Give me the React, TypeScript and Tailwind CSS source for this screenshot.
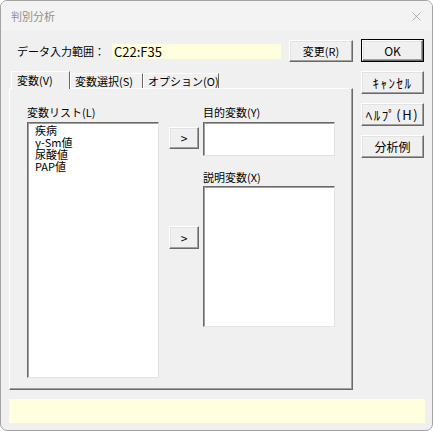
import { X } from 'lucide-react'

const font = { fontFamily: '"Noto Sans CJK JP", "Noto Sans", sans-serif' }

const raised =
  'border border-t-white border-l-white border-r-[#696969] border-b-[#696969] shadow-[inset_-1px_-1px_0_#a0a0a0,inset_1px_1px_0_#e3e3e3] bg-[#f0f0f0]'

const sunken =
  'border border-t-[#696969] border-l-[#696969] border-r-[#e3e3e3] border-b-[#e3e3e3] shadow-[inset_1px_1px_0_#a0a0a0] bg-white'

function Btn({ label, className = '' }: { label: string; className?: string }) {
  return (
    <button
      type="button"
      className={`${raised} flex items-center justify-center whitespace-nowrap leading-none text-black ${className}`}
    >
      {label}
    </button>
  )
}

function SideButton({ label, isDefault, narrow }: { label: string; isDefault?: boolean; narrow?: boolean }) {
  const text = narrow ? 'text-[13px] tracking-[1.5px]' : 'text-[12px]'
  if (isDefault) {
    return (
      <div className="h-[23px] w-[63px] border border-black">
        <Btn label={label} className={`h-full w-full ${text}`} />
      </div>
    )
  }
  return <Btn label={label} className={`h-[23px] w-[63px] ${text}`} />
}

export default function App() {
  return (
    <div
      className="flex h-[431px] w-[433px] flex-col overflow-hidden rounded-[7px] border border-[#a3a3a3] bg-[#f0f0f0] text-black"
      style={font}
    >
      {/* title bar */}
      <div className="flex h-[30px] items-center justify-between bg-[#f3f3f3] pl-[10px] pr-[8px]">
        <span className="text-[11px] text-[#8f8f8f]">判別分析</span>
        <X size={15} strokeWidth={1} className="text-[#8a8a8a]" />
      </div>

      <div className="flex pl-[8px] pt-[8px]">
        {/* left side */}
        <div className="flex w-[344px] flex-col">
          <div className="flex h-[23px] items-center pt-[1px]">
            <span className="ml-[8px] w-[95px] whitespace-nowrap text-[11px]">データ入力範囲：</span>
            <div className="flex h-[15px] w-[169px] items-center bg-[#ffffe0] pl-[2px] text-[13px] leading-none">
              C22:F35
            </div>
            <Btn label="変更(R)" className="ml-[8px] h-[22px] w-[64px] text-[11px]" />
          </div>

          {/* tabs */}
          <div className="mt-[8px] flex h-[18px] items-end whitespace-nowrap pl-[2px] text-[11px]">
            <div className="z-10 -mb-[1px] flex h-[18px] w-[59px] items-center border-l border-r border-t border-l-white border-r-[#696969] border-t-white bg-[#f0f0f0] pl-[5px]">
              変数(V)
            </div>
            <div className="flex h-[15px] w-[73px] items-center border-l border-r border-t border-l-white border-r-[#696969] border-t-white pl-[4px]">
              変数選択(S)
            </div>
            <div className="flex h-[15px] w-[76px] items-center border-l border-r border-t border-l-white border-r-[#696969] border-t-white pl-[4px]">
              オプション(O)
            </div>
          </div>

          {/* tab panel */}
          <div className="flex h-[302px] w-[344px] border border-b-[#696969] border-l-white border-r-[#696969] border-t-white pl-[17px] pt-[16px] text-[11px] shadow-[inset_-1px_-1px_0_#a0a0a0]">
            <div className="flex flex-col">
              <span className="h-[17px] leading-[14px]">変数リスト(L)</span>
              <div className={`${sunken} h-[256px] w-[132px] pl-[7px] pt-[1px] text-[11px] leading-[12px]`}>
                <div className="h-[12px]">疾病</div>
                <div className="h-[12px]">γ-Sm値</div>
                <div className="h-[12px]">尿酸値</div>
                <div className="h-[12px]">PAP値</div>
              </div>
            </div>

            <div className="ml-[10px] flex flex-col pt-[22px]">
              <Btn label=">" className="h-[22px] w-[30px] text-[12px]" />
              <Btn label=">" className="mt-[77px] h-[23px] w-[30px] text-[12px]" />
            </div>

            <div className="ml-[4px] flex flex-col">
              <span className="h-[17px] leading-[14px]">目的変数(Y)</span>
              <div className={`${sunken} h-[34px] w-[132px]`} />
              <span className="mt-[14px] h-[16px] leading-[14px]">説明変数(X)</span>
              <div className={`${sunken} h-[141px] w-[132px]`} />
            </div>
          </div>
        </div>

        {/* right buttons */}
        <div className="ml-[8px] flex flex-col gap-[9px]">
          <SideButton label="OK" isDefault />
          <SideButton label="ｷｬﾝｾﾙ" narrow />
          <SideButton label="ﾍﾙﾌﾟ(H)" narrow />
          <SideButton label="分析例" />
        </div>
      </div>

      <div className="ml-[8px] mt-[9px] h-[24px] w-[416px] bg-[#ffffe0]" />
    </div>
  )
}
